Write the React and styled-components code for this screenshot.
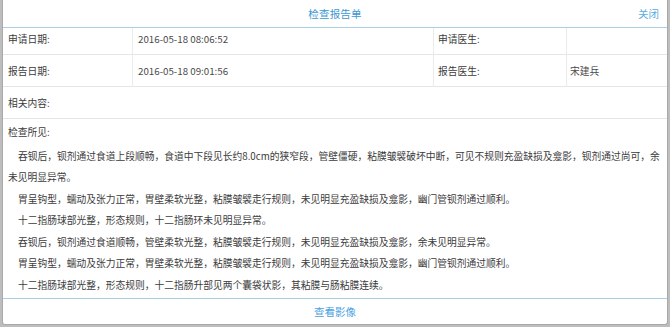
import React from 'react';
import styled, { createGlobalStyle } from 'styled-components';

const Global = createGlobalStyle`
  html, body { margin: 0; padding: 0; }
  body {
    background: #bdbdbd;
    font-family: "Noto Sans CJK SC", "Noto Sans", sans-serif;
    width: 670px;
    height: 327px;
    overflow: hidden;
  }
`;

const Backdrop = styled.div`
  width: 670px;
  height: 327px;
  padding: 0 2px 2px 2px;
  box-sizing: border-box;
`;

const Modal = styled.div`
  height: 325px;
  background: #fff;
  border: 1px solid #a9a9a9;
  border-top: none;
  border-radius: 0 0 3px 3px;
  display: flex;
  flex-direction: column;
  box-sizing: border-box;
  overflow: hidden;
`;

const Header = styled.div`
  height: 27px;
  border-bottom: 1px solid #a8cfe3;
  display: grid;
  grid-template-columns: 1fr auto 1fr;
  align-items: center;
  flex-shrink: 0;
`;

const Title = styled.div`
  grid-column: 2;
  font-size: 10.5px;
  color: #3a97d4;
  letter-spacing: 0.2px;
`;

const Close = styled.div`
  grid-column: 3;
  justify-self: end;
  padding-right: 8px;
  font-size: 10.5px;
  color: #5aaee0;
  cursor: pointer;
`;

const InfoGrid = styled.div`
  display: grid;
  grid-template-columns: 130px 301px 133px 1fr;
  flex-shrink: 0;
`;

const Cell = styled.div`
  height: ${p => p.$h}px;
  padding: ${p => p.$pt}px 0 0 ${p => p.$pl}px;
  box-sizing: content-box;
  border-bottom: 1px solid #e6e6e6;
  border-right: ${p => (p.$last ? 'none' : '1px solid #ebebeb')};
  font-size: 9.75px;
  line-height: 14px;
  color: ${p => (p.$value ? '#4a4a4a' : '#3c3c3c')};
  white-space: nowrap;
`;

const RelatedRow = styled.div`
  height: 31px;
  border-bottom: 1px solid #e6e6e6;
  display: flex;
  align-items: center;
  padding-left: 5px;
  font-size: 9.75px;
  color: #3c3c3c;
  flex-shrink: 0;
`;

const Findings = styled.div`
  flex: 1;
  padding: 3px 5px 0 5px;
  overflow: hidden;
  font-size: 9.75px;
  line-height: 21.5px;
  color: #3c3c3c;
`;

const FindingsTitle = styled.div`
  margin-bottom: 2px;
`;

const Para = styled.p`
  margin: 0;
  text-indent: 10px;
`;

const Footer = styled.div`
  height: 25px;
  border-top: 1px solid #a8cfe3;
  display: flex;
  align-items: center;
  justify-content: center;
  font-size: 10.5px;
  color: #4aa3df;
  flex-shrink: 0;
`;

const rows = [
  { h: 26, pt: 4, cells: ['申请日期:', '2016-05-18 08:06:52', '申请医生:', ''] },
  { h: 31, pt: 9, cells: ['报告日期:', '2016-05-18 09:01:56', '报告医生:', '宋建兵'] },
];

const pads = [5, 5, 4, 3];

const paragraphs = [
  '吞钡后，钡剂通过食道上段顺畅，食道中下段见长约8.0cm的狭窄段，管壁僵硬，粘膜皱襞破坏中断，可见不规则充盈缺损及龛影，钡剂通过尚可，余未见明显异常。',
  '胃呈钩型，蠕动及张力正常，胃壁柔软光整，粘膜皱襞走行规则，未见明显充盈缺损及龛影，幽门管钡剂通过顺利。',
  '十二指肠球部光整，形态规则，十二指肠环未见明显异常。',
  '吞钡后，钡剂通过食道顺畅，管壁柔软光整，粘膜皱襞走行规则，未见明显充盈缺损及龛影，余未见明显异常。',
  '胃呈钩型，蠕动及张力正常，胃壁柔软光整，粘膜皱襞走行规则，未见明显充盈缺损及龛影，幽门管钡剂通过顺利。',
  '十二指肠球部光整，形态规则，十二指肠升部见两个囊袋状影，其粘膜与肠粘膜连续。',
];

export default function App() {
  return (
    <>
      <Global />
      <Backdrop>
        <Modal>
          <Header>
            <Title>检查报告单</Title>
            <Close>关闭</Close>
          </Header>
          <InfoGrid>
            {rows.map((r, ri) =>
              r.cells.map((c, ci) => (
                <Cell
                  key={`${ri}-${ci}`}
                  $h={r.h - r.pt}
                  $pt={r.pt}
                  $pl={pads[ci]}
                  $last={ci === 3}
                  $value={ci % 2 === 1}
                >
                  {c}
                </Cell>
              ))
            )}
          </InfoGrid>
          <RelatedRow>相关内容:</RelatedRow>
          <Findings>
            <FindingsTitle>检查所见:</FindingsTitle>
            {paragraphs.map((p, i) => (
              <Para key={i}>{p}</Para>
            ))}
          </Findings>
          <Footer>查看影像</Footer>
        </Modal>
      </Backdrop>
    </>
  );
}
